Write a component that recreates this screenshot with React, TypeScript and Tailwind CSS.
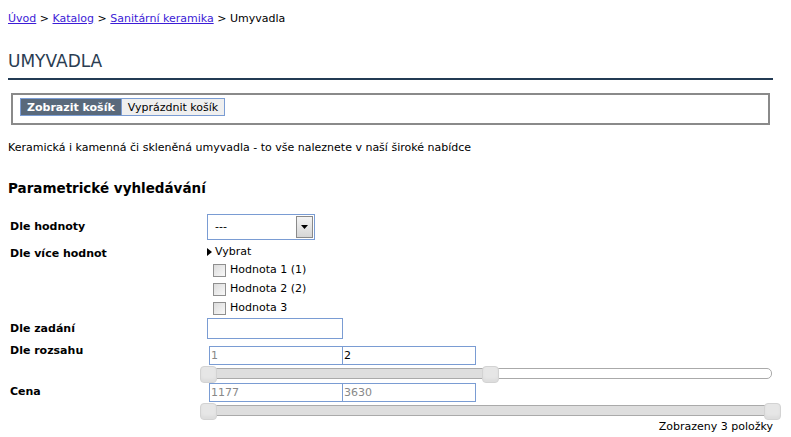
import React from 'react';

const FONT = "font-['DejaVu_Sans',Verdana,sans-serif]";
const INPUT = 'h-[19px] border border-[#7a9cd3] bg-white px-[1px] text-[11px] leading-[17px] outline-none';

const Slider = ({ from, to }: { from: number; to: number }) => (
    <div className="relative mt-[1px] ml-[8px] h-[17px] w-[564px]">
        <div className="absolute left-0 right-0 top-[2px] h-[11px] rounded-[5px] border border-[#aaaaaa] bg-white" />
        <div
            className="absolute top-[2px] h-[11px] border-y border-[#aaaaaa] bg-[#dedede]"
            style={{ left: `${from * 100}%`, width: `${(to - from) * 100}%` }}
        />
        {[from, to].map((v, i) => (
            <div
                key={i}
                className="absolute top-0 h-[17px] w-[17px] -ml-[8px] rounded-[4px] border border-[#d3d3d3] bg-[#e6e6e6] shadow-[inset_0_-3px_3px_rgba(0,0,0,0.04)]"
                style={{ left: `${v * 100}%` }}
            />
        ))}
    </div>
);

const Check = ({ label }: { label: string }) => (
    <label className="flex h-[19px] items-center gap-[4px] pl-[6px]">
        <span className="h-[13px] w-[13px] border border-[#8f8f8f] bg-gradient-to-br from-[#dcdcdc] to-[#f8f8f8]" />
        {label}
    </label>
);

export default function App() {
    return (
        <div className={`${FONT} min-h-[437px] bg-white px-[8px] pt-[10px] text-[11px] text-black`}>
            <div className="h-[18px] leading-[18px]">
                <a href="#" className="text-[#3c1cd6] underline">Úvod</a>
                {' > '}
                <a href="#" className="text-[#3c1cd6] underline">Katalog</a>
                {' > '}
                <a href="#" className="text-[#3c1cd6] underline">Sanitární keramika</a>
                {' > '}Umyvadla
            </div>

            <h1 className="mt-[22px] mr-[10px] border-b-2 border-[#233b54] pb-[6px] text-[17px] leading-[22px] text-[#2a3d52]">UMYVADLA</h1>

            <div className="mt-[13px] ml-[3px] mr-[13px] border-2 border-[#8a8a8a] px-[7px] pt-[3px] pb-[7px]">
                <div className="flex h-[18px]">
                    <button className="border border-[#7a9cd3] bg-[#59697b] px-[6px] text-[11px] leading-[15px] font-bold text-white">Zobrazit košík</button>
                    <button className="border border-l-0 border-[#7a9cd3] bg-[#efefef] px-[6px] text-[11px] leading-[15px] text-black">Vyprázdnit košík</button>
                </div>
            </div>

            <p className="mt-[15px] leading-[16px]">Keramická i kamenná či skleněná umyvadla - to vše naleznete v naší široké nabídce</p>

            <h2 className="mt-[22px] text-[13.5px] leading-[20px] font-bold">Parametrické vyhledávání</h2>

            <div className="mt-[16px] grid grid-cols-[199px_1fr]">
                <div className="pl-[2px] pt-[5px] font-bold">Dle hodnoty</div>
                <div className="flex h-[26px] w-[108px] items-center justify-between border border-[#7a9cd3] bg-white pl-[7px] pr-[1px]">
                    <span>---</span>
                    <span className="flex h-[22px] w-[17px] items-center justify-center border border-[#8a8a8a] bg-gradient-to-b from-[#f4f4f4] to-[#d6d6d6]">
                        <svg width="7" height="4" viewBox="0 0 7 4"><path d="M0 0h7L3.5 4z" fill="#000" /></svg>
                    </span>
                </div>

                <div className="pl-[2px] pt-[6px] font-bold">Dle více hodnot</div>
                <div className="pt-[3px]">
                    <div className="flex h-[18px] items-center gap-[3px]">
                        <svg width="5" height="8" viewBox="0 0 5 8"><path d="M0 0l5 4-5 4z" fill="#000" /></svg>
                        Vybrat
                    </div>
                    <Check label="Hodnota 1 (1)" />
                    <Check label="Hodnota 2 (2)" />
                    <Check label="Hodnota 3" />
                </div>

                <div className="pl-[2px] pt-[3px] font-bold">Dle zadání</div>
                <div>
                    <input className="h-[21px] w-[136px] border border-[#7a9cd3] bg-white outline-none" />
                </div>

                <div className="pl-[2px] pt-[4px] font-bold">Dle rozsahu</div>
                <div className="-ml-[7px] pt-[7px]">
                    <div className="ml-[9px] flex">
                        <input readOnly value="1" className={`${INPUT} w-[134px] text-[#888]`} />
                        <input readOnly value="2" className={`${INPUT} w-[133px] border-l-0 text-black`} />
                    </div>
                    <Slider from={0} to={0.5} />
                </div>

                <div className="pl-[2px] pt-[1px] font-bold">Cena</div>
                <div className="-ml-[7px]">
                    <div className="ml-[9px] flex">
                        <input readOnly value="1177" className={`${INPUT} w-[134px] text-[#888]`} />
                        <input readOnly value="3630" className={`${INPUT} w-[133px] border-l-0 text-[#888]`} />
                    </div>
                    <Slider from={0} to={1} />
                </div>
            </div>

            <div className="mr-[10px] -mt-[1px] text-right leading-[16px]">Zobrazeny 3 položky</div>
        </div>
    );
}
